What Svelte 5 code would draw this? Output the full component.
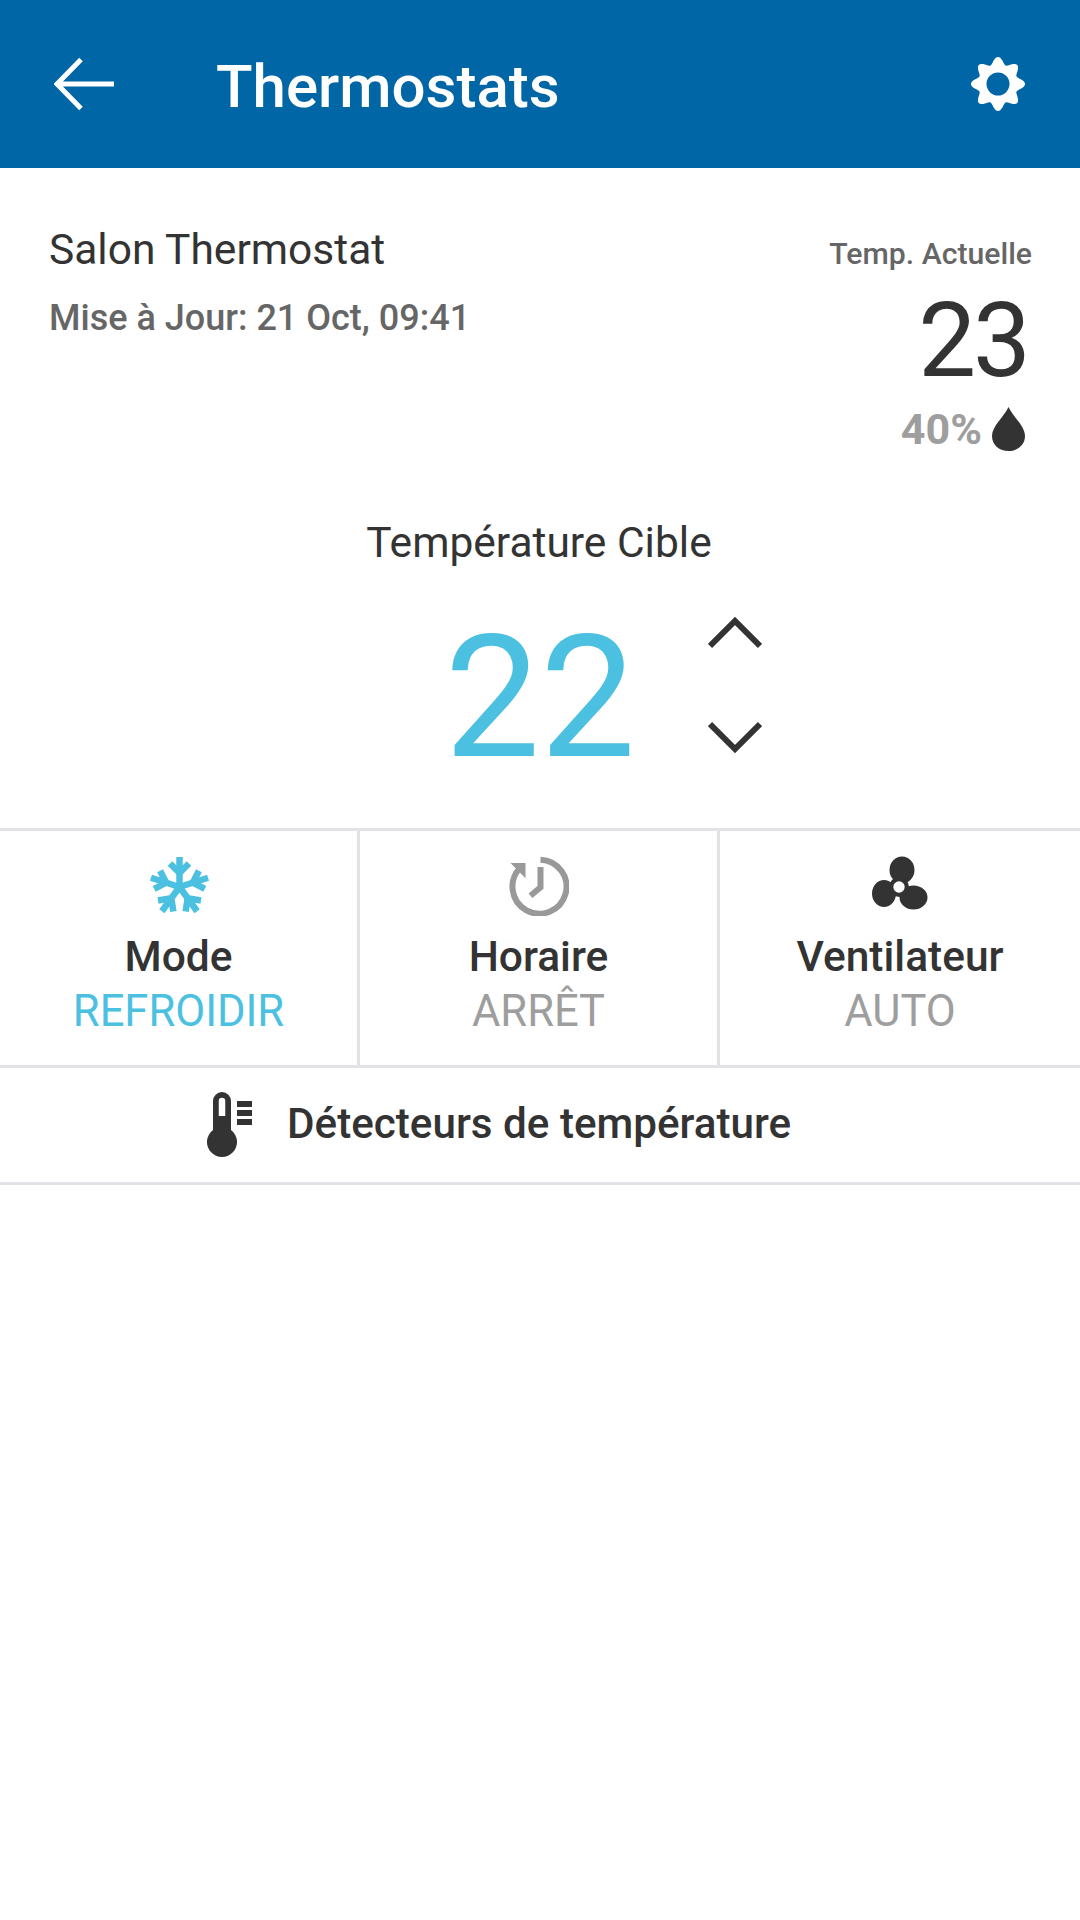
<script>
    // rounded 8-lobed gear outline, hole cut with evenodd
    function gearPath() {
        let d = "";
        for (let i = 0; i < 180; i++) {
            const a = (i / 180) * Math.PI * 2;
            const r = 23.5 + 3.5 * Math.cos(8 * a);
            const x = 27 + r * Math.sin(a);
            const y = 27 - r * Math.cos(a);
            d += (i ? "L" : "M") + x.toFixed(2) + " " + y.toFixed(2);
        }
        return d + "ZM27 15.5a11.5 11.5 0 1 0 0 23a11.5 11.5 0 1 0 0-23Z";
    }

    const snowArms = [0, 72, 144, 216, 288];
</script>

<div class="screen">
    <header class="topbar">
        <svg class="back" width="60" height="54" viewBox="0 0 60 54" aria-hidden="true">
            <path d="M60 27H3M27 2.5L3 27L27 51.5" fill="none" stroke="#fff" stroke-width="5" />
        </svg>
        <h1>Thermostats</h1>
        <svg class="gear" width="54" height="54" viewBox="0 0 54 54" aria-hidden="true">
            <path d={gearPath()} fill="#fff" fill-rule="evenodd" />
        </svg>
    </header>

    <section class="status">
        <div class="device">
            <div class="name">Salon Thermostat</div>
            <div class="updated">Mise à Jour: 21 Oct, 09:41</div>
        </div>
        <div class="current">
            <div class="current-label">Temp. Actuelle</div>
            <div class="current-temp">23</div>
            <div class="humidity">
                <span>40%</span>
                <svg width="33" height="44" viewBox="0 0 33 44" aria-hidden="true">
                    <path d="M16.5 0C21 10 33 19 33 29C33 38 25.500 44 16.500 44C7.500 44 0 38 0 29C0 19 12 10 16.500 0Z" fill="#333" />
                </svg>
            </div>
        </div>
    </section>

    <section class="target">
        <div class="target-label">Température Cible</div>
        <div class="target-row">
            <div class="target-temp">22</div>
            <div class="stepper">
                <svg width="54" height="32" viewBox="0 0 54 32" aria-hidden="true">
                    <path d="M2 29L27 4L52 29" fill="none" stroke="#333" stroke-width="6" />
                </svg>
                <svg width="54" height="32" viewBox="0 0 54 32" aria-hidden="true">
                    <path d="M2 3L27 28L52 3" fill="none" stroke="#333" stroke-width="6" />
                </svg>
            </div>
        </div>
    </section>

    <section class="tiles">
        <div class="tile">
            <svg width="60" height="60" viewBox="0 0 60 60" aria-hidden="true">
                {#each snowArms as deg}
                    <g transform="rotate({deg} 30.500 31)" fill="none" stroke="#4bc0e0" stroke-width="6.500">
                        <path d="M30.500 31V1" />
                        <path d="M21 7.500L30.500 17L40 7.500" />
                    </g>
                {/each}
            </svg>
            <div class="tile-title">Mode</div>
            <div class="tile-value active">REFROIDIR</div>
        </div>
        <div class="tile">
            <svg width="60" height="60" viewBox="0 0 60 60" aria-hidden="true">
                <path d="M31.500 3.700A27 27 0 1 1 11 12" fill="none" stroke="#999" stroke-width="6" />
                <path d="M1.500 7H16.500V22.300Z" fill="#999" />
                <path d="M31.500 11V31.300L21.500 39.700" fill="none" stroke="#999" stroke-width="6" />
            </svg>
            <div class="tile-title">Horaire</div>
            <div class="tile-value">ARRÊT</div>
        </div>
        <div class="tile">
            <svg width="60" height="60" viewBox="0 0 60 60" aria-hidden="true">
                <ellipse cx="32" cy="14" rx="12.500" ry="13.500" fill="#333" />
                <ellipse cx="14" cy="37.500" rx="12" ry="13.500" fill="#333" />
                <ellipse cx="43.500" cy="41.500" rx="14" ry="12" fill="#333" />
                <circle cx="29" cy="31" r="10" fill="#333" />
                <circle cx="29" cy="31" r="5.700" fill="#fff" />
            </svg>
            <div class="tile-title">Ventilateur</div>
            <div class="tile-value">AUTO</div>
        </div>
    </section>

    <section class="sensors">
        <svg width="46" height="66" viewBox="0 0 46 66" aria-hidden="true">
            <path fill-rule="evenodd" fill="#333" d="M6 38V9a9 9 0 0 1 18 0V38a15 15 0 1 1-18 0ZM11.750 24H18.250V9a3.250 3.250 0 0 0-6.500 0Z" />
            <path d="M30 9H45V15H30ZM30 18H45V24H30ZM30 27H45V33H30Z" fill="#333" />
        </svg>
        <span>Détecteurs de température</span>
    </section>
</div>

<style>
    :global(body) {
        background: #fff;
    }

    .screen {
        width: 1080px;
        height: 1920px;
        background: #fff;
        font-family: Roboto, sans-serif;
        color: #333;
        overflow: hidden;
    }

    /* ── Top bar ── */
    .topbar {
        height: 168px;
        background: #0066a6;
        display: flex;
        align-items: center;
        padding: 0 55px 0 54px;
        box-sizing: border-box;
    }
    .topbar h1 {
        margin: 5px 0 0 102px;
        flex: 1;
        color: #fff;
        font-size: 60px;
        font-weight: 500;
        line-height: 1;
    }

    /* ── Current reading ── */
    .status {
        height: 323px;
        box-sizing: border-box;
        padding: 57px 48px 0 49px;
        display: flex;
        justify-content: space-between;
    }
    .name {
        font-size: 42.500px;
        line-height: 50px;
    }
    .updated {
        margin-top: 20px;
        font-size: 36px;
        line-height: 46px;
        font-weight: 500;
        color: #666;
    }
    .current {
        display: flex;
        flex-direction: column;
        align-items: flex-end;
        padding-top: 9px;
    }
    .current-label {
        font-size: 30.200px;
        line-height: 40px;
        font-weight: 500;
        color: #666;
    }
    .current-temp {
        margin-top: 15px;
        margin-right: 4px;
        margin-bottom: 1px;
        font-size: 103px;
        line-height: 104px;
        letter-spacing: -3px;
    }
    .humidity {
        margin-top: 10px;
        margin-right: 7px;
        display: flex;
        align-items: center;
        gap: 10px;
        font-size: 43px;
        font-weight: 700;
        color: #9e9e9e;
    }

    /* ── Target temperature ── */
    .target {
        height: 337px;
        display: flex;
        flex-direction: column;
        align-items: center;
    }
    .target-label {
        margin-top: 27px;
        margin-right: 2px;
        font-size: 42.500px;
        line-height: 50px;
    }
    .target-row {
        position: relative;
        margin-top: 30px;
    }
    .target-temp {
        font-size: 170px;
        line-height: 200px;
        color: #4bc0e0;
    }
    .stepper {
        position: absolute;
        left: 264px;
        top: 19px;
        display: flex;
        flex-direction: column;
        gap: 72px;
    }

    /* ── Tiles ── */
    .tiles {
        display: grid;
        grid-template-columns: 360px 360px 360px;
        height: 237px;
        box-sizing: border-box;
        border-top: 3px solid #e2e2e6;
    }
    .tile {
        display: flex;
        flex-direction: column;
        align-items: center;
        padding-top: 25px;
        border-right: 3px solid #e2e2e6;
    }
    .tile:last-child {
        border-right: 0;
    }
    .tile-title {
        margin-top: 17px;
        font-size: 42.500px;
        line-height: 48px;
        font-weight: 500;
    }
    .tile-value {
        margin-top: 7px;
        font-size: 43.500px;
        line-height: 48px;
        color: #9e9e9e;
    }
    .tile-value.active {
        color: #4bc0e0;
    }

    /* ── Sensors row ── */
    .sensors {
        height: 120px;
        box-sizing: border-box;
        border-top: 3px solid #e2e2e6;
        border-bottom: 3px solid #e2e2e6;
        display: flex;
        align-items: center;
        padding-left: 207px;
        gap: 34px;
        font-size: 42.200px;
        font-weight: 500;
    }
    .sensors span {
        margin-bottom: 4px;
    }
</style>
